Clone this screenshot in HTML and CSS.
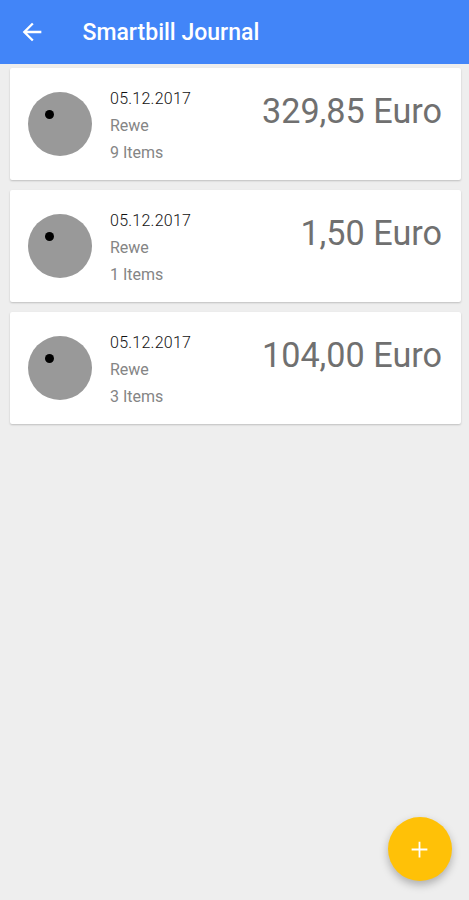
FILE: index.html
```html
<!DOCTYPE html>
<html lang="en">
<head>
    <meta charset="UTF-8">
    <meta name="viewport" content="width=device-width, initial-scale=1.0">
    <title>Smartbill Journal</title>
    <link rel="stylesheet" href="styles.css">
</head>
<body>
    <header class="toolbar">
        <button class="back-button" aria-label="Back">
            <svg width="28" height="28" viewBox="0 0 24 24">
                <path fill="#fff" d="M20 11H7.83l5.59-5.59L12 4l-8 8 8 8 1.41-1.41L7.83 13H20v-2z"/>
            </svg>
        </button>
        <h1>Smartbill Journal</h1>
    </header>

    <main class="bill-list">
        <div class="bill-card">
            <div class="avatar"></div>
            <div class="bill-info">
                <p class="bill-date">05.12.2017</p>
                <p>Rewe</p>
                <p>9 Items</p>
            </div>
            <div class="bill-total">329,85 Euro</div>
        </div>

        <div class="bill-card">
            <div class="avatar"></div>
            <div class="bill-info">
                <p class="bill-date">05.12.2017</p>
                <p>Rewe</p>
                <p>1 Items</p>
            </div>
            <div class="bill-total">1,50 Euro</div>
        </div>

        <div class="bill-card">
            <div class="avatar"></div>
            <div class="bill-info">
                <p class="bill-date">05.12.2017</p>
                <p>Rewe</p>
                <p>3 Items</p>
            </div>
            <div class="bill-total">104,00 Euro</div>
        </div>
    </main>

    <button class="fab" aria-label="Add bill">
        <svg width="28" height="28" viewBox="0 0 24 24">
            <path fill="#fff" d="M19 12.8h-6.2V19h-1.6v-6.2H5v-1.6h6.2V5h1.6v6.2H19z"/>
        </svg>
    </button>
</body>
</html>
```

FILE: styles.css
```css
* {
    margin: 0;
    padding: 0;
    box-sizing: border-box;
}

body {
    font-family: Roboto, sans-serif;
    background: #eee;
    height: 100vh;
    overflow: hidden;
}

button {
    border: none;
    cursor: pointer;
}

.toolbar {
    display: flex;
    align-items: center;
    height: 63.5px;
    padding-left: 18px;
    background: #4285f8;
    color: #fff;
}

.back-button {
    display: flex;
    background: none;
}

.toolbar h1 {
    margin-left: 36.5px;
    padding-top: 1px;
    font-size: 23px;
    font-weight: 500;
}

/* list */
.bill-list {
    display: flex;
    flex-direction: column;
    gap: 10px;
    padding: 4.5px 8px 0 9.5px;
}

.bill-card {
    display: flex;
    height: 112px;
    padding: 17px 19px 0 18.5px;
    background: #fff;
    border-radius: 2px;
    box-shadow: 0 1px 2px rgba(0, 0, 0, 0.2);
}

.avatar {
    position: relative;
    width: 64px;
    height: 64px;
    margin-top: 7px;
    border-radius: 50%;
    background: #999;
}

.avatar::after {
    content: '';
    position: absolute;
    left: 17px;
    top: 18px;
    width: 9px;
    height: 9px;
    border-radius: 50%;
    background: #000;
}

.bill-info {
    margin-left: 18px;
    font-size: 16px;
    line-height: 27px;
    color: #858585;
}

.bill-date {
    font-weight: 300;
    letter-spacing: 0.25px;
    color: #111;
}

.bill-total {
    margin-left: auto;
    font-size: 34.2px;
    line-height: 53px;
    color: #707070;
}

/* add button */
.fab {
    position: fixed;
    right: 17.5px;
    bottom: 19px;
    display: flex;
    align-items: center;
    justify-content: center;
    width: 64px;
    height: 64px;
    border-radius: 50%;
    background: #ffc107;
    box-shadow: 0 4px 8px rgba(0, 0, 0, 0.27);
}

.fab svg {
    width: 27px;
    height: 27px;
}
```
